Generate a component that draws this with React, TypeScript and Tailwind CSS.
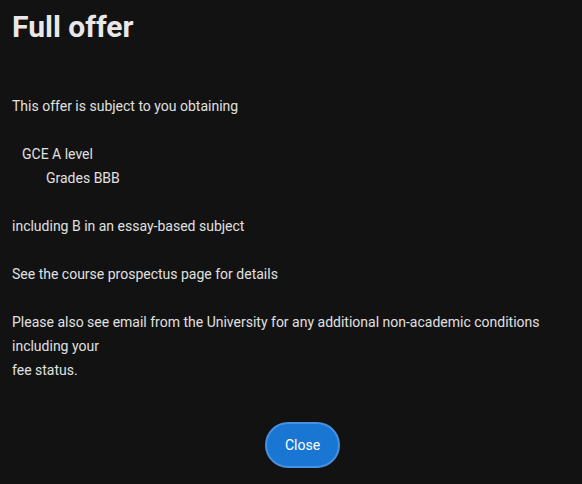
export default function App() {
  return (
    <div className="min-h-[484px] w-[582px] bg-[#121212] text-[#e0e0e0] font-['Roboto',sans-serif]">
      <div className="px-3 pt-[9px]">
        <h1 className="text-[30px] leading-[36px] font-bold text-[#e8e8e8]">Full offer</h1>
        <div className="mt-[49px] text-[14px] leading-[24px]">
          <p>This offer is subject to you obtaining</p>
          <div className="mt-6 pl-[10px]">
            <p>GCE A level</p>
            <p className="pl-[24px]">Grades BBB</p>
          </div>
          <p className="mt-6">including B in an essay-based subject</p>
          <p className="mt-6">See the course prospectus page for details</p>
          <p className="mt-6">
            Please also see email from the University for any additional non-academic conditions including your
            <br />
            fee status.
          </p>
        </div>
        <div className="flex justify-center mt-[40px] pl-[23px]">
          <button className="h-[46px] w-[75px] rounded-full bg-[#1976d2] border-2 border-[#4a90e2] text-white text-[14px] font-normal">
            Close
          </button>
        </div>
      </div>
    </div>
  );
}
